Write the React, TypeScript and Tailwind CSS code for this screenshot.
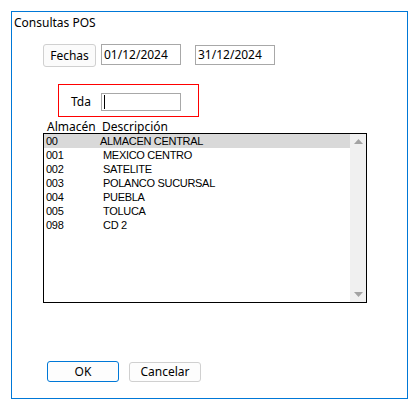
import React from 'react';

interface Almacen {
  code: string;
  name: string;
}

const almacenes: Almacen[] = [
  { code: '00', name: 'ALMACEN CENTRAL' },
  { code: '001', name: 'MEXICO CENTRO' },
  { code: '002', name: 'SATELITE' },
  { code: '003', name: 'POLANCO SUCURSAL' },
  { code: '004', name: 'PUEBLA' },
  { code: '005', name: 'TOLUCA' },
  { code: '098', name: 'CD 2' },
];

const uiFont = "font-['Noto_Sans','Open_Sans',sans-serif]";
const listFont = "font-['Liberation_Sans','Arial',sans-serif]";

const App: React.FC = () => {
  return (
    <div className={`w-[418px] h-[410px] bg-white text-black ${uiFont} text-[12px] leading-[16px] pt-[11px] pl-[11px]`}>
      {/* ventana */}
      <div className="w-[397px] h-[388px] border border-[#0078d7] flex flex-col">
        <div className="pl-[2px] pt-[3px] h-[32px]">Consultas POS</div>

        {/* fechas */}
        <div className="flex items-start pl-[31px]">
          <button className="w-[53px] h-[23px] rounded-[3px] border border-[#d0d0d0] bg-[#fbfbfb]">Fechas</button>
          <div className="ml-[5px] w-[80px] h-[21px] border border-[#a8a8a8] pl-[2px] leading-[19px]">01/12/2024</div>
          <div className="ml-[14px] mt-[1px] w-[80px] h-[20px] border border-[#a8a8a8] pl-[2px] leading-[18px]">31/12/2024</div>
        </div>

        {/* tienda */}
        <div className="ml-[46px] mt-[17px] w-[141px] h-[33px] border border-[#ff0000] flex items-start">
          <span className="ml-[12px] mt-[9px] w-[21px]">Tda</span>
          <div className="ml-[9px] mt-[8px] w-[80px] h-[18px] border border-[#a8a8a8] flex items-center pl-[2px]">
            <div className="w-px h-[14px] bg-black" />
          </div>
        </div>

        {/* encabezados */}
        <div className="flex pl-[35px] h-[16px] leading-[19px]">
          <span className="w-[55px]">Almacén</span>
          <span>Descripción</span>
        </div>

        {/* lista */}
        <div className={`ml-[31px] w-[324px] h-[170px] border border-black flex ${listFont} text-[11px] tracking-[-0.3px] leading-[14px]`}>
          <div className="flex-1">
            {almacenes.map((a, i) => (
              <div key={a.code} className={`flex h-[14px] ${i === 0 ? 'bg-[#d9d9d9]' : ''}`}>
                <span className="w-[56px] pl-[2px]">{a.code}</span>
                <span className={i === 0 ? 'pl-[0px]' : 'pl-[3px]'}>{a.name}</span>
              </div>
            ))}
          </div>
          <div className="w-[16px] bg-[#f0f0f0] flex flex-col justify-between items-center py-[5px]">
            <svg width="9" height="5" viewBox="0 0 9 5"><path d="M0 5 L4.5 0 L9 5 Z" fill="#a3a3a3" /></svg>
            <svg width="9" height="5" viewBox="0 0 9 5"><path d="M0 0 L4.5 5 L9 0 Z" fill="#a3a3a3" /></svg>
          </div>
        </div>

        {/* botones */}
        <div className="flex items-start pl-[35px] mt-[58px]">
          <button className="w-[72px] h-[21px] rounded-[3px] border border-[#0078d7] bg-[#fdfdfd] leading-[19px]">OK</button>
          <button className="ml-[10px] mt-[1px] w-[72px] h-[20px] rounded-[3px] border border-[#d0d0d0] bg-[#fdfdfd] leading-[18px]">Cancelar</button>
        </div>
      </div>
    </div>
  );
};

export default App;
